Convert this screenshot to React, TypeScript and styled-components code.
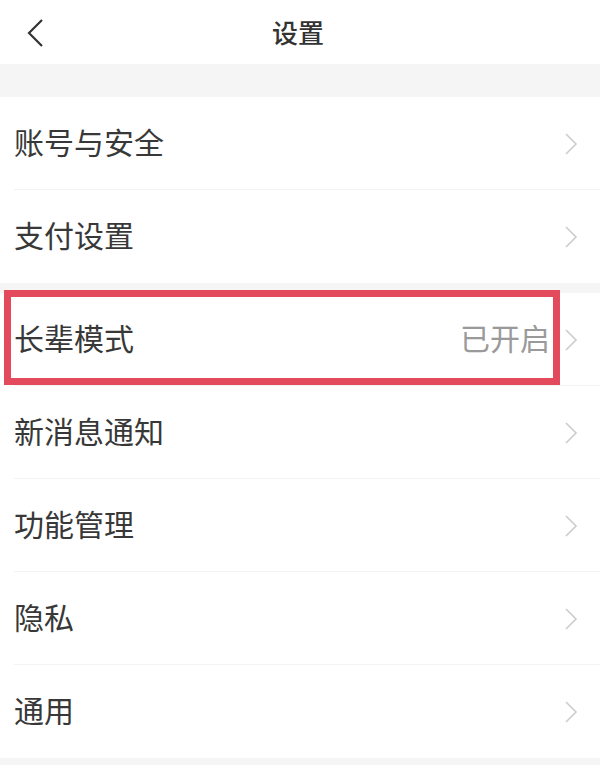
import styled, { createGlobalStyle } from "styled-components";

const GlobalStyle = createGlobalStyle`
  html, body {
    margin: 0;
    padding: 0;
    background: #ffffff;
  }
  body {
    font-family: "Noto Sans CJK SC", "Noto Sans", sans-serif;
    color: #333333;
  }
`;

const Page = styled.div`
  width: 600px;
  min-height: 765px;
  background: #f5f5f5;
  display: flex;
  flex-direction: column;
`;

const Header = styled.header`
  height: 64px;
  background: #ffffff;
  display: flex;
  align-items: center;
  justify-content: center;
  position: relative;
`;

const BackButton = styled.div`
  position: absolute;
  left: 24px;
  top: 17px;
  width: 22px;
  height: 32px;
  display: flex;
  align-items: center;
  justify-content: center;
`;

const Title = styled.h1`
  margin: 0;
  font-size: 26px;
  font-weight: 500;
  color: #333333;
  line-height: 1;
  transform: translateX(-2px);
`;

const Section = styled.section<{ $top: number }>`
  margin-top: ${(props) => props.$top}px;
  background: #ffffff;
  display: flex;
  flex-direction: column;
`;

const Row = styled.div<{ $last?: boolean }>`
  height: 93px;
  box-sizing: border-box;
  display: flex;
  align-items: center;
  padding: 0 22px 6px 14px;
  position: relative;
  &::after {
    content: "";
    display: ${(props) => (props.$last ? "none" : "block")};
    position: absolute;
    left: 14px;
    right: 0;
    bottom: 0;
    height: 1px;
    background: #f3f3f3;
  }
`;

const Label = styled.span`
  flex: 1;
  font-size: 30px;
  line-height: 1;
  color: #383838;
`;

const Value = styled.span`
  font-size: 30px;
  line-height: 1;
  color: #9a9a9a;
  margin-right: 14px;
`;

const ChevronBox = styled.span`
  display: flex;
  margin-top: 6px;
`;

const Highlight = styled.div`
  position: absolute;
  left: 4px;
  right: 40px;
  top: -3px;
  bottom: 1px;
  border: 7px solid #e34a5b;
  pointer-events: none;
`;

function Chevron() {
  return (
    <ChevronBox>
      <svg width="14" height="24" viewBox="0 0 14 24">
        <polyline
          points="2,2 12,12 2,22"
          fill="none"
          stroke="#cccccc"
          strokeWidth="1.6"
        />
      </svg>
    </ChevronBox>
  );
}

function BackIcon() {
  return (
    <svg width="18" height="30" viewBox="0 0 18 30">
      <polyline
        points="16,2 3,15 16,28"
        fill="none"
        stroke="#333333"
        strokeWidth="2.2"
      />
    </svg>
  );
}

const firstGroup = ["账号与安全", "支付设置"];
const secondGroup = ["长辈模式", "新消息通知", "功能管理", "隐私", "通用"];

function App() {
  return (
    <Page>
      <GlobalStyle />
      <Header>
        <BackButton>
          <BackIcon />
        </BackButton>
        <Title>设置</Title>
      </Header>
      <Section $top={33}>
        {firstGroup.map((item, i) => (
          <Row key={item} $last={i === firstGroup.length - 1}>
            <Label>{item}</Label>
            <Chevron />
          </Row>
        ))}
      </Section>
      <Section $top={10}>
        {secondGroup.map((item, i) => (
          <Row key={item} $last={i === secondGroup.length - 1}>
            <Label>{item}</Label>
            {item === "长辈模式" && <Value>已开启</Value>}
            <Chevron />
            {item === "长辈模式" && <Highlight />}
          </Row>
        ))}
      </Section>
    </Page>
  );
}

export default App;
